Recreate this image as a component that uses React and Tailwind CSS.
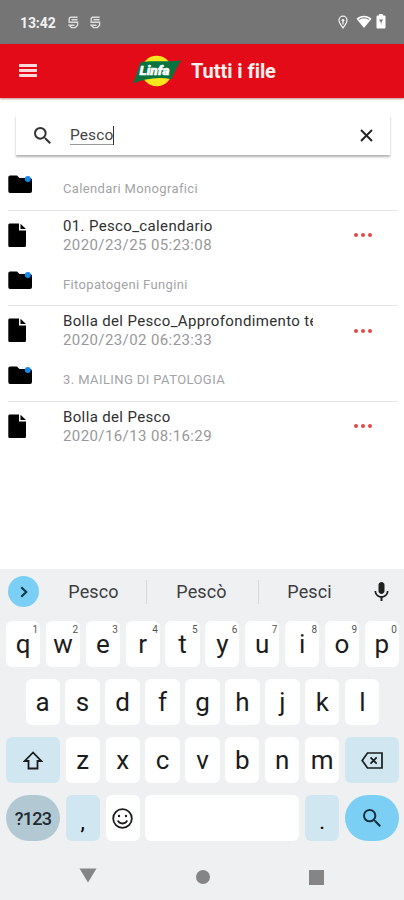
import React, { useState } from 'react'

const groups = [
  {
    folder: "Calendari Monografici",
    folderClass: "text-[13px] tracking-[0.36px]",
    name: "01. Pesco_calendario",
    date: "2020/23/25 05:23:08",
  },
  {
    folder: "Fitopatogeni Fungini",
    folderClass: "text-[13px] tracking-[0.35px]",
    name: "Bolla del Pesco_Approfondimento te",
    date: "2020/23/02 06:23:33",
  },
  {
    folder: "3. MAILING DI PATOLOGIA",
    folderClass: "text-[13px] tracking-[0.41px]",
    name: "Bolla del Pesco",
    date: "2020/16/13 08:16:29",
  },
];

const SearchIcon = ({ className }) => (
  <svg viewBox="3 3 17.5 17.5" className={className} fill="currentColor">
    <path d="M15.5 14h-.79l-.28-.27A6.471 6.471 0 0 0 16 9.5 6.5 6.5 0 1 0 9.5 16c1.61 0 3.09-.59 4.23-1.57l.27.28v.79l5 4.99L20.49 19l-4.99-5zm-6 0C7.01 14 5 11.99 5 9.5S7.01 5 9.5 5 14 7.01 14 9.5 11.99 14 9.5 14z" />
  </svg>
);

const StatusMark = () => (
  <svg width="11" height="13" viewBox="0 0 11 13" fill="none" stroke="#dedede" strokeWidth="1.4">
    <path d="M9.600 1.200H3Q1.200 1.200 1.200 3V6.200H9.600V9.200L7.300 11.600H3.500L1.200 9.200H6.500M3.500 3.700H9.600" />
  </svg>
);

function StatusBar() {
  return (
    <div className="h-[43.5px] shrink-0 bg-[#757575] flex items-center pl-5 pr-[17px] text-[#f2f2f2]">
      <span className="w-[36px] text-[14px] font-bold leading-none tracking-[-0.1px] pt-[2px]">13:42</span>
      <div className="flex gap-[11px] ml-[12px] pt-[1px]">
        <StatusMark />
        <StatusMark />
      </div>
      <div className="ml-auto flex items-center">
        <svg width="10" height="14" viewBox="0 0 10 14" fill="none" stroke="#eeeeee" strokeWidth="1.3">
          <path d="M5 13C3.5 10.8 1 8 1 5.2a4 4 0 0 1 8 0C9 8 6.500 10.800 5 13Z" />
          <circle cx="5" cy="5.300" r="1.400" fill="#eeeeee" stroke="none" />
          <path d="M5 6V9.500" />
        </svg>
        <svg className="ml-[8px]" width="16" height="13" viewBox="0 0 16 13">
          <path d="M8 13 .5 3.700C2.500 1.800 5 .7 8 .7s5.500 1.100 7.500 3Z" fill="#fff" />
          <path d="M2.800 4.700C4.200 3.500 6 2.900 8 2.900s3.800.6 5.200 1.800" fill="none" stroke="#757575" />
        </svg>
        <svg className="ml-[4px] mr-[1px]" width="10" height="15" viewBox="0 0 10 15">
          <path d="M3 0h4v1.600h1.500q1 0 1 1V13.500q0 1-1 1h-7q-1 0-1-1V2.600q0-1 1-1H3Z" fill="#fff" />
          <path d="M3 5.500H7L5.400 8.500V11.500L4.600 8Z" fill="#757575" />
        </svg>
      </div>
    </div>
  );
}

function Logo() {
  return (
    <svg width="50" height="32" viewBox="0 0 50 32">
      <circle cx="24.700" cy="16" r="15.300" fill="#f8e71c" />
      <path d="M8.500 7.200C21 4.800 35 7.600 49.500 5.300C45.500 10.500 42.700 17 39.300 24.300C25 21.300 12 24.500 .8 28.600C4.500 21 5.500 14 8.500 7.200Z" fill="#0a7440" />
      <text
        x="7.500"
        y="20.300"
        textLength="30"
        lengthAdjust="spacingAndGlyphs"
        fill="#fff"
        stroke="#fff"
        strokeWidth=".5"
        className="text-[13px] font-black italic"
      >
        Linfa
      </text>
    </svg>
  );
}

function Header() {
  return (
    <div className="h-[54px] shrink-0 bg-[#e30b17] flex items-center pl-[19px] shadow-[0_1px_2px_rgba(120,40,30,0.5)]">
      <div className="w-[18px] flex flex-col gap-[2.500px]">
        <div className="h-[2.700px] bg-[#ffd9d9]"></div>
        <div className="h-[2.700px] bg-[#ffd9d9]"></div>
        <div className="h-[2.700px] bg-[#ffd9d9]"></div>
      </div>
      <div className="ml-[95px]"><Logo /></div>
      <h1 className="ml-[9px] text-[20px] font-bold leading-none tracking-[-0.05px] text-[#fff0ee] whitespace-nowrap">Tutti i file</h1>
    </div>
  );
}

function FileGroup({ group }) {
  return (
    <div className="h-[95.600px] pl-2 pr-[6px]">
      <div className="h-[47.500px] border-b border-[#e6e6e6] flex">
        <svg className="mt-[12px] shrink-0" width="25" height="19" viewBox="0 0 25 19">
          <path d="M2 .5H9L11.500 3H22Q24 3 24 5V16Q24 18 22 18H2Q.3 18 .3 16V2.200Q.3 .5 2 .5Z" fill="#000" />
          <circle cx="19.800" cy="4" r="3" fill="#1688e8" />
        </svg>
        <p className={`ml-[30px] mt-[17px] leading-[18px] text-[#a3a3a6] ${group.folderClass}`}>{group.folder}</p>
      </div>
      <div className="flex">
        <svg className="mt-[12px] shrink-0" width="19" height="25" viewBox="0 0 19 25">
          <path d="M1.500 .5H11V7.500H18V22.500Q18 24 16.500 24H1.500Q.3 24 .3 22.500V2Q.3 .5 1.500 .5ZM12.500 .8 18 6H12.500Z" fill="#000" />
        </svg>
        <div className="ml-[36px] mt-[6px] w-[250px]">
          <p className="text-[15px] leading-[19px] tracking-[0.36px] text-[#303030] whitespace-nowrap overflow-hidden">{group.name}</p>
          <p className="text-[15px] leading-[18px] tracking-[0.4px] text-[#98989b] whitespace-nowrap">{group.date}</p>
        </div>
        <div className="ml-[41px] mt-[22.500px] flex gap-[3px]">
          <span className="size-[4px] rounded-full bg-[#e34848]"></span>
          <span className="size-[4px] rounded-full bg-[#e34848]"></span>
          <span className="size-[4px] rounded-full bg-[#e34848]"></span>
        </div>
      </div>
    </div>
  );
}

const Key = ({ label, hint, onPress }) => (
  <button
    onClick={onPress}
    className="relative w-[34.200px] h-[46px] shrink-0 rounded-[6px] bg-white flex items-center justify-center text-[26px] leading-none text-[#1c1c1c]"
  >
    {label}
    {hint && <span className="absolute top-[3px] right-[2px] text-[10px] leading-[11px] text-[#555]">{hint}</span>}
  </button>
);

function Keyboard({ type, erase, pick }) {
  return (
    <div className="h-[331px] shrink-0 bg-[#eef0f2] flex flex-col">
      {/* Suggestions */}
      <div className="h-[52px] shrink-0 flex items-center pl-[8px] pr-[15px] pb-[7px] text-[18px] text-[#3c3e40]">
        <div className="size-[31px] rounded-full bg-[#7bcff5] flex items-center justify-center">
          <svg width="8" height="12" viewBox="0 0 8 12" fill="none" stroke="#16394a" strokeWidth="2.200">
            <path d="M1.300 1.200 6.200 6 1.300 10.800" />
          </svg>
        </div>
        <button onClick={() => pick("Pesco")} className="ml-[2px] w-[105px] tracking-[0.1px]">Pesco</button>
        <div className="w-px h-[24px] bg-[#d6d9dc]"></div>
        <button onClick={() => pick("Pescò")} className="w-[111px] pr-[2px] tracking-[0.1px]">Pescò</button>
        <div className="w-px h-[24px] bg-[#d6d9dc]"></div>
        <button onClick={() => pick("Pesci")} className="w-[101px] tracking-[0.1px]">Pesci</button>
        <svg className="ml-auto" width="15" height="19" viewBox="5 2 14 19" fill="#202020">
          <path d="M12 14c1.660 0 3-1.340 3-3V5c0-1.660-1.340-3-3-3S9 3.340 9 5v6c0 1.660 1.340 3 3 3zm5.300-3c0 3-2.540 5.100-5.300 5.100S6.700 14 6.700 11H5c0 3.410 2.720 6.230 6 6.720V21h2v-3.280c3.280-.48 6-3.300 6-6.720h-1.700z" />
        </svg>
      </div>

      {/* Keys */}
      <div className="pl-[6px] pr-[5px] flex flex-col gap-[12px]">
        <div className="flex justify-between">
          {"qwertyuiop".split("").map((k, i) => (
            <Key key={k} label={k} hint={String((i + 1) % 10)} onPress={() => type(k)} />
          ))}
        </div>
        <div className="flex justify-between px-[19.500px]">
          {"asdfghjkl".split("").map((k) => <Key key={k} label={k} onPress={() => type(k)} />)}
        </div>
        <div className="flex justify-between">
          <button className="w-[54px] h-[46px] rounded-[6px] bg-[#d0e7f2] flex items-center justify-center">
            <svg width="20" height="19" viewBox="0 0 20 19" fill="none" stroke="#1c1c1c" strokeWidth="1.800">
              <path d="M10 1.500 1.800 10H5.500V17.500H14.500V10H18.200Z" />
            </svg>
          </button>
          {"zxcvbnm".split("").map((k) => <Key key={k} label={k} onPress={() => type(k)} />)}
          <button onClick={erase} className="w-[54px] h-[46px] rounded-[6px] bg-[#d0e7f2] flex items-center justify-center">
            <svg width="22" height="17" viewBox="0 0 22 17" fill="none" stroke="#1c1c1c" strokeWidth="1.700">
              <path d="M6.500 1H21V16H6.500L1.200 8.500ZM9.500 5.300 15.700 11.700M15.700 5.300 9.500 11.700" />
            </svg>
          </button>
        </div>
        <div className="flex justify-between">
          <button className="w-[54px] h-[46px] rounded-[23px] bg-[#b2c8d3] text-[18px] font-medium tracking-[-0.700px] text-[#202b31]">?123</button>
          <button onClick={() => type(",")} className="w-[34.200px] h-[46px] rounded-[6px] bg-[#d0e7f2] text-[22px] leading-none pt-[7px]">,</button>
          <button className="w-[34.200px] h-[46px] rounded-[6px] bg-white flex items-center justify-center">
            <svg width="21" height="21" viewBox="0 0 21 21" fill="none" stroke="#1c1c1c" strokeWidth="1.800">
              <circle cx="10.500" cy="10.500" r="9.300" />
              <path d="M5.800 12.500C7.500 16.500 13.500 16.500 15.200 12.500" />
              <circle cx="7" cy="8" r="1.200" fill="#1c1c1c" stroke="none" />
              <circle cx="14" cy="8" r="1.200" fill="#1c1c1c" stroke="none" />
            </svg>
          </button>
          <button onClick={() => type(" ")} className="w-[154px] h-[46px] rounded-[6px] bg-white"></button>
          <button onClick={() => type(".")} className="w-[34.200px] h-[46px] rounded-[6px] bg-[#d0e7f2] text-[22px] leading-none pt-[7px]">.</button>
          <button className="w-[54px] h-[46px] rounded-[23px] bg-[#7bcff5] flex items-center justify-center text-[#15303d]">
            <SearchIcon className="size-[18px]" />
          </button>
        </div>
      </div>

      {/* Navigation */}
      <div className="flex-1 flex items-center justify-between pl-[79px] pr-[80px] pt-[13px]">
        <svg width="18" height="15" viewBox="0 0 18 15" className="mb-[3px]">
          <path d="M.5 .5H17.500L9 14.500Z" fill="#858585" />
        </svg>
        <div className="size-[14px] rounded-full bg-[#858585]"></div>
        <div className="size-[15px] bg-[#858585]"></div>
      </div>
    </div>
  );
}

function App() {
  const [query, setQuery] = useState("Pesco");

  return (
    <div className="w-full h-[900px] flex flex-col overflow-hidden bg-white font-['Roboto',sans-serif]">
      <StatusBar />
      <Header />

      {/* Search */}
      <div className="mt-[17.500px] ml-[16px] mr-[14.500px] h-[40px] shrink-0 bg-white flex items-center pl-[18px] pr-[17px] shadow-[0_2px_2px_rgba(0,0,0,0.3)]">
        <SearchIcon className="size-[17px] text-[#333]" />
        <div className="ml-[19px] flex items-center">
          <span className="text-[15.500px] leading-[18px] border-b border-[#999] tracking-[0.1px] text-[#444] whitespace-pre">{query}</span>
          <span className="w-px h-[19px] bg-[#333]"></span>
        </div>
        <button onClick={() => setQuery("")} className="ml-auto">
          <svg width="13" height="13" viewBox="0 0 13 13" fill="none" stroke="#222" strokeWidth="1.900">
            <path d="M1 1 12 12M12 1 1 12" />
          </svg>
        </button>
      </div>

      {/* File list */}
      <div className="flex-1 pt-[8px] overflow-hidden">
        {groups.map((group) => <FileGroup key={group.folder} group={group} />)}
      </div>

      <Keyboard
        type={(k) => setQuery(query + k)}
        erase={() => setQuery(query.slice(0, -1))}
        pick={setQuery}
      />
    </div>
  )
}

export default App;
